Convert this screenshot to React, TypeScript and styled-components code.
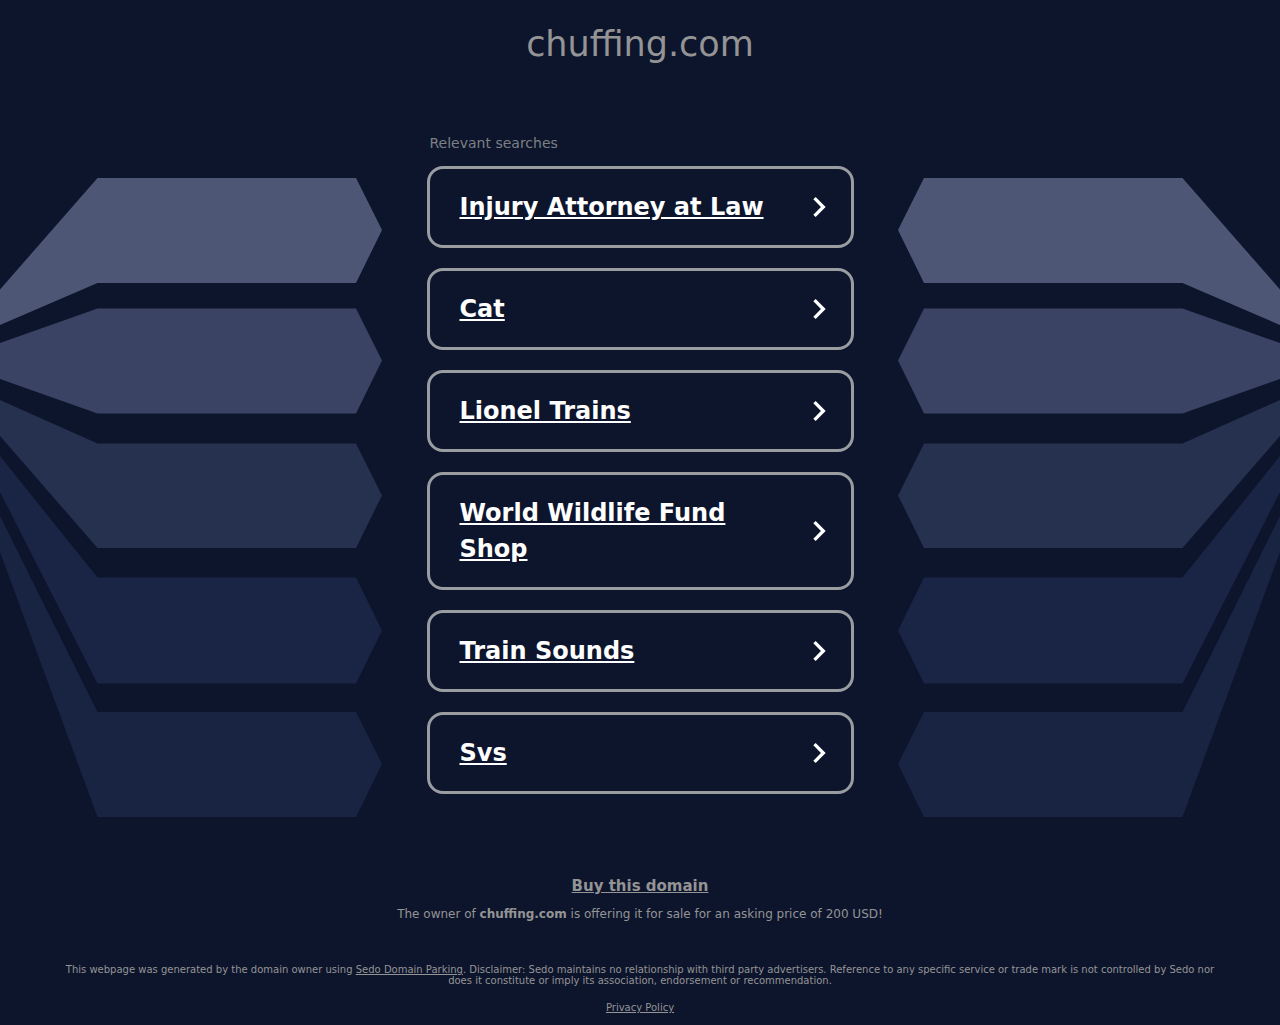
import React from "react";
import styled, { createGlobalStyle } from "styled-components";

const GlobalStyle = createGlobalStyle`
  *, *::before, *::after { box-sizing: border-box; }
  body {
    margin: 0;
    background: #0d152d;
    color: #949494;
    font-family: "DejaVu Sans", Verdana, sans-serif;
  }
`;

const Header = styled.header`
  padding: 20px;
  text-align: center;
`;

const Title = styled.h1`
  margin: 0;
  font-size: 35px;
  line-height: 48px;
  font-weight: 400;
`;

const Main = styled.main`
  display: grid;
  grid-template-columns: 1fr minmax(0, 427px) 1fr;
  align-items: start;
  padding-top: 44px;
`;

const WingColumn = styled.div<{ $side: "left" | "right" }>`
  display: flex;
  justify-content: ${(p) => (p.$side === "left" ? "flex-start" : "flex-end")};
  padding-top: 46px;
`;

const WingDrawing = styled.svg<{ $mirrored: boolean }>`
  display: block;
  width: 382px;
  max-width: 100%;
  height: auto;
  transform: ${(p) => (p.$mirrored ? "scaleX(-1)" : "none")};
`;

const ListTitle = styled.h2`
  margin: 0 0 12px;
  padding-left: 3px;
  color: #7c8084;
  font-size: 14px;
  line-height: 22px;
  font-weight: 400;
`;

const List = styled.ul`
  display: flex;
  flex-direction: column;
  gap: 20px;
  margin: 0;
  padding: 0;
  list-style: none;
`;

const Card = styled.a`
  display: flex;
  align-items: center;
  justify-content: space-between;
  padding: 0 12px 0 30px;
  border: 3px solid #9a9da0;
  border-radius: 16px;
  color: #fff;
`;

const CardLabel = styled.span`
  padding: 20px 0;
  font-size: 24px;
  line-height: 36px;
  font-weight: 700;
`;

const Chevron = styled.svg`
  flex: none;
  width: 40px;
  height: 40px;
  fill: #fff;
`;

const Offer = styled.section`
  padding-top: 59px;
  text-align: center;
`;

const BuyLink = styled.a`
  color: #949494;
  font-size: 15px;
  line-height: 20px;
  font-weight: 700;
`;

const BuyLine = styled.div`
  display: flex;
  justify-content: center;
`;

const Price = styled.p`
  margin: 10px 0 0;
  font-size: 12px;
  line-height: 16px;
`;

const Footer = styled.footer`
  padding: 42px 64px 12px;
  font-size: 10px;
  line-height: 11px;
  text-align: center;
`;

const Disclaimer = styled.p`
  margin: 0 0 16px;
`;

const Privacy = styled.p`
  margin: 0;
`;

const FooterLink = styled.a`
  color: #949494;
`;

const feathers = [
  { fill: "#4d5775", points: "0,111.5 97.5,0 356,0 382,52 356,105 97.5,105 0,147" },
  { fill: "#3a4363", points: "0,165 97.5,130.5 356,130.5 382,182.5 356,235.5 97.5,235.5 0,201" },
  { fill: "#26304f", points: "0,222 97.5,265.5 356,265.5 382,317.5 356,370 97.5,370 0,258" },
  { fill: "#1a2444", points: "0,278 97.5,399.5 356,399.5 382,452.5 356,505.5 97.5,505.5 0,314" },
  { fill: "#192342", points: "0,338 97.5,534 356,534 382,586 356,639 97.5,639 0,374" },
];

const searches = [
  "Injury Attorney at Law",
  "Cat",
  "Lionel Trains",
  "World Wildlife Fund Shop",
  "Train Sounds",
  "Svs",
];

function Wing({ side }: { side: "left" | "right" }) {
  return (
    <WingColumn $side={side}>
      <WingDrawing $mirrored={side === "right"} viewBox="0 0 382 639" aria-hidden="true">
        {feathers.map((f) => (
          <polygon key={f.points} fill={f.fill} points={f.points} />
        ))}
      </WingDrawing>
    </WingColumn>
  );
}

export default function App() {
  return (
    <>
      <GlobalStyle />
      <Header>
        <Title>chuffing.com</Title>
      </Header>
      <Main>
        <Wing side="left" />
        <section>
          <ListTitle>Relevant searches</ListTitle>
          <List>
            {searches.map((label) => (
              <li key={label}>
                <Card href="#">
                  <CardLabel>{label}</CardLabel>
                  <Chevron viewBox="0 0 24 24" aria-hidden="true">
                    <path d="M10 6L8.59 7.41 13.17 12l-4.58 4.59L10 18l6-6z" />
                  </Chevron>
                </Card>
              </li>
            ))}
          </List>
        </section>
        <Wing side="right" />
      </Main>
      <Offer>
        <BuyLine>
          <BuyLink href="#">Buy this domain</BuyLink>
        </BuyLine>
        <Price>
          The owner of <b>chuffing.com</b> is offering it for sale for an asking price of 200 USD!
        </Price>
      </Offer>
      <Footer>
        <Disclaimer>
          This webpage was generated by the domain owner using{" "}
          <FooterLink href="#">Sedo Domain Parking</FooterLink>. Disclaimer: Sedo maintains no
          relationship with third party advertisers. Reference to any specific service or trade
          mark is not controlled by Sedo nor does it constitute or imply its association,
          endorsement or recommendation.
        </Disclaimer>
        <Privacy>
          <FooterLink href="#">Privacy Policy</FooterLink>
        </Privacy>
      </Footer>
    </>
  );
}
